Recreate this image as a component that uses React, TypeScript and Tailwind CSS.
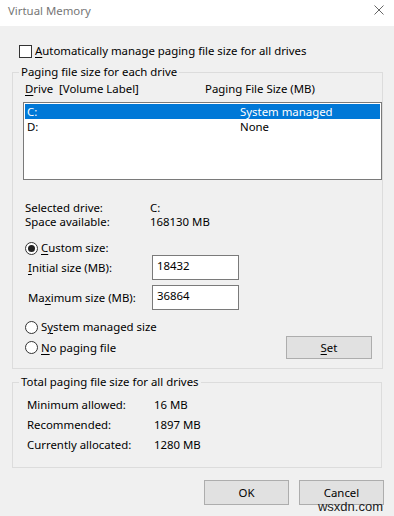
import React from 'react';

const font = { fontFamily: '"Segoe UI", "Noto Sans", sans-serif' };

const Radio: React.FC<{ checked?: boolean }> = ({ checked }) => (
    <span className="flex h-[13px] w-[13px] shrink-0 items-center justify-center rounded-full border border-[#333] bg-white">
        {checked && <span className="h-[7px] w-[7px] rounded-full bg-[#222]" />}
    </span>
);

const Key: React.FC<{ children: React.ReactNode }> = ({ children }) => (
    <span className="underline underline-offset-2">{children}</span>
);

export default function App() {
    return (
        <div
            className="relative h-[516px] w-[394px] overflow-hidden bg-[#f0f0f0] text-[11.4px] leading-[16px] text-black"
            style={font}
        >
            {/* title bar */}
            <div className="flex h-[26px] items-start justify-between bg-white pl-[8px] pr-[10px] pt-[3px]">
                <span className="text-[#767676]">Virtual Memory</span>
                <svg width="10" height="10" viewBox="0 0 10 10" className="mt-[2px]">
                    <path d="M0.5 0.5L9.5 9.5M9.5 0.5L0.5 9.5" stroke="#666" strokeWidth="1" fill="none" />
                </svg>
            </div>

            {/* auto manage */}
            <div className="ml-[19px] mt-[17px] flex h-[16px] items-center gap-[3px]">
                <span className="h-[13px] w-[13px] border border-[#333] bg-white" />
                <span>
                    <Key>A</Key>utomatically manage paging file size for all drives
                </span>
            </div>

            {/* per drive group */}
            <fieldset className="mx-[12px] mt-[5px] w-[370px] border border-[#dcdcdc] pb-[9px]">
                <legend className="ml-[6px] px-[2px]">Paging file size for each drive</legend>
                <div className="pl-[10px]">
                    <div className="mt-[1px] flex h-[16px] pl-[2px] whitespace-pre">
                        <span className="w-[180px]">
                            <Key>D</Key>rive  [Volume Label]
                        </span>
                        <span>Paging File Size (MB)</span>
                    </div>
                    <div className="mt-[5px] h-[78px] w-[359px] border border-[#7a7a7a] bg-white pt-[1px]">
                        <div className="mx-[1px] flex h-[15px] items-center bg-[#0078d7] pl-[2px] text-white">
                            <span className="w-[213px]">C:</span>
                            <span>System managed</span>
                        </div>
                        <div className="mx-[1px] flex h-[15px] items-center pl-[2px]">
                            <span className="w-[213px]">D:</span>
                            <span>None</span>
                        </div>
                    </div>

                    <div className="ml-[2px] mt-[21px] flex h-[14px] items-center leading-[14px]">
                        <span className="w-[125px]">Selected drive:</span>
                        <span>C:</span>
                    </div>
                    <div className="ml-[2px] flex h-[14px] items-center leading-[14px]">
                        <span className="w-[125px]">Space available:</span>
                        <span>168130 MB</span>
                    </div>

                    <div className="ml-[2px] mt-[12px] flex h-[14px] items-center gap-[3px] leading-[14px]">
                        <Radio checked />
                        <span>
                            <Key>C</Key>ustom size:
                        </span>
                    </div>
                    <div className="ml-[5px] flex h-[25px] items-center">
                        <span className="w-[124px]">
                            <Key>I</Key>nitial size (MB):
                        </span>
                        <div className="h-[25px] w-[87px] border border-[#7a7a7a] bg-white pl-[4px] pt-[2px]">18432</div>
                    </div>
                    <div className="ml-[5px] mt-[5px] flex h-[25px] items-center">
                        <span className="w-[124px]">
                            Ma<Key>x</Key>imum size (MB):
                        </span>
                        <div className="h-[25px] w-[87px] border border-[#7a7a7a] bg-white pl-[4px] pt-[2px]">36864</div>
                    </div>

                    <div className="ml-[2px] mt-[9px] flex h-[16px] items-center gap-[3px]">
                        <Radio />
                        <span>
                            S<Key>y</Key>stem managed size
                        </span>
                    </div>
                    <div className="ml-[2px] mt-[1px] flex h-[23px] items-center">
                        <div className="flex flex-1 items-center gap-[3px]">
                            <Radio />
                            <span>
                                <Key>N</Key>o paging file
                            </span>
                        </div>
                        <button className="mr-[10px] flex h-[23px] w-[86px] items-center justify-center border border-[#adadad] bg-[#e1e1e1]">
                            <Key>S</Key>et
                        </button>
                    </div>
                </div>
            </fieldset>

            {/* totals group */}
            <fieldset className="mx-[12px] mt-[5px] w-[370px] border border-[#dcdcdc] pb-[12px]">
                <legend className="ml-[6px] px-[2px]">Total paging file size for all drives</legend>
                <div className="pl-[14px]">
                    <div className="mt-[5px] flex h-[20px] items-center">
                        <span className="w-[127px]">Minimum allowed:</span>
                        <span>16 MB</span>
                    </div>
                    <div className="flex h-[20px] items-center">
                        <span className="w-[127px]">Recommended:</span>
                        <span>1897 MB</span>
                    </div>
                    <div className="flex h-[20px] items-center">
                        <span className="w-[127px]">Currently allocated:</span>
                        <span>1280 MB</span>
                    </div>
                </div>
            </fieldset>

            {/* dialog buttons */}
            <div className="mt-[12px] flex justify-end gap-[10px] pr-[10px]">
                <button className="flex h-[25px] w-[85px] items-center justify-center border border-[#adadad] bg-[#e1e1e1]">
                    OK
                </button>
                <button className="flex h-[25px] w-[85px] items-center justify-center border border-[#adadad] bg-[#e1e1e1]">
                    Cancel
                </button>
            </div>

            <span
                className="absolute bottom-[1px] right-[11px] text-[13px] leading-[16px] text-[#222]"
                style={{ fontFamily: '"Liberation Sans", Arial, sans-serif' }}
            >
                wsxdn.com
            </span>
        </div>
    );
}
